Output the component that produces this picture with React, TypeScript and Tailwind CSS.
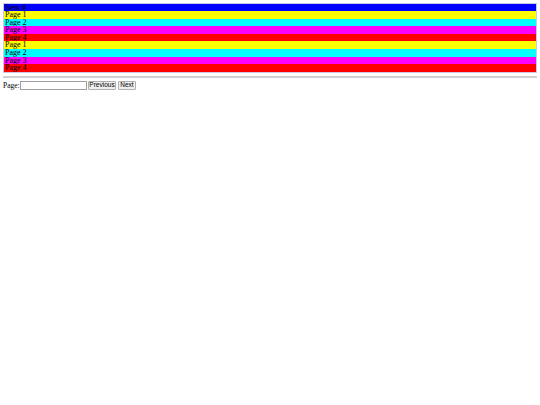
import React from 'react';

const pages = ['Page 1', 'Page 2', 'Page 3', 'Page 4', 'Page 1', 'Page 2', 'Page 3', 'Page 4'];
const rowColors: Record<string, string> = {
    'Page 1': 'bg-[#ffff00]',
    'Page 2': 'bg-[#00ffff]',
    'Page 3': 'bg-[#ff00ff]',
    'Page 4': 'bg-[#ff0000]',
};

const App: React.FC = () => {
    return (
        <div className="px-[3px] pt-[3px] font-['Liberation_Serif',serif] text-[8px] leading-[7px] text-black">
            <div className="border border-[#c8c8e8]">
                <div className="bg-[#0000ff] h-[7px] pl-px overflow-hidden">Item #</div>
                {pages.map((p, i) => (
                    <div key={i} className={`${rowColors[p]} h-[7.6px] pl-px overflow-hidden`}>{p}</div>
                ))}
            </div>
            <hr className="mt-[3px] border-t-2 border-[#d0d0d0]" />
            <div className="flex items-center mt-[3px] text-[7.5px] leading-none">
                <span className="w-[17px]">Page:</span>
                <input type="text" className="w-[67px] h-[9px] border border-[#a0a0a0] bg-white" />
                <button className="ml-px w-[28px] h-[9px] border border-[#b0b0b0] bg-[#efefef] text-[6.5px] font-['Liberation_Sans',sans-serif] rounded-[1px]">Previous</button>
                <button className="ml-[2px] w-[18px] h-[9px] border border-[#b0b0b0] bg-[#efefef] text-[6.5px] font-['Liberation_Sans',sans-serif] rounded-[1px]">Next</button>
            </div>
        </div>
    );
};

export default App;
